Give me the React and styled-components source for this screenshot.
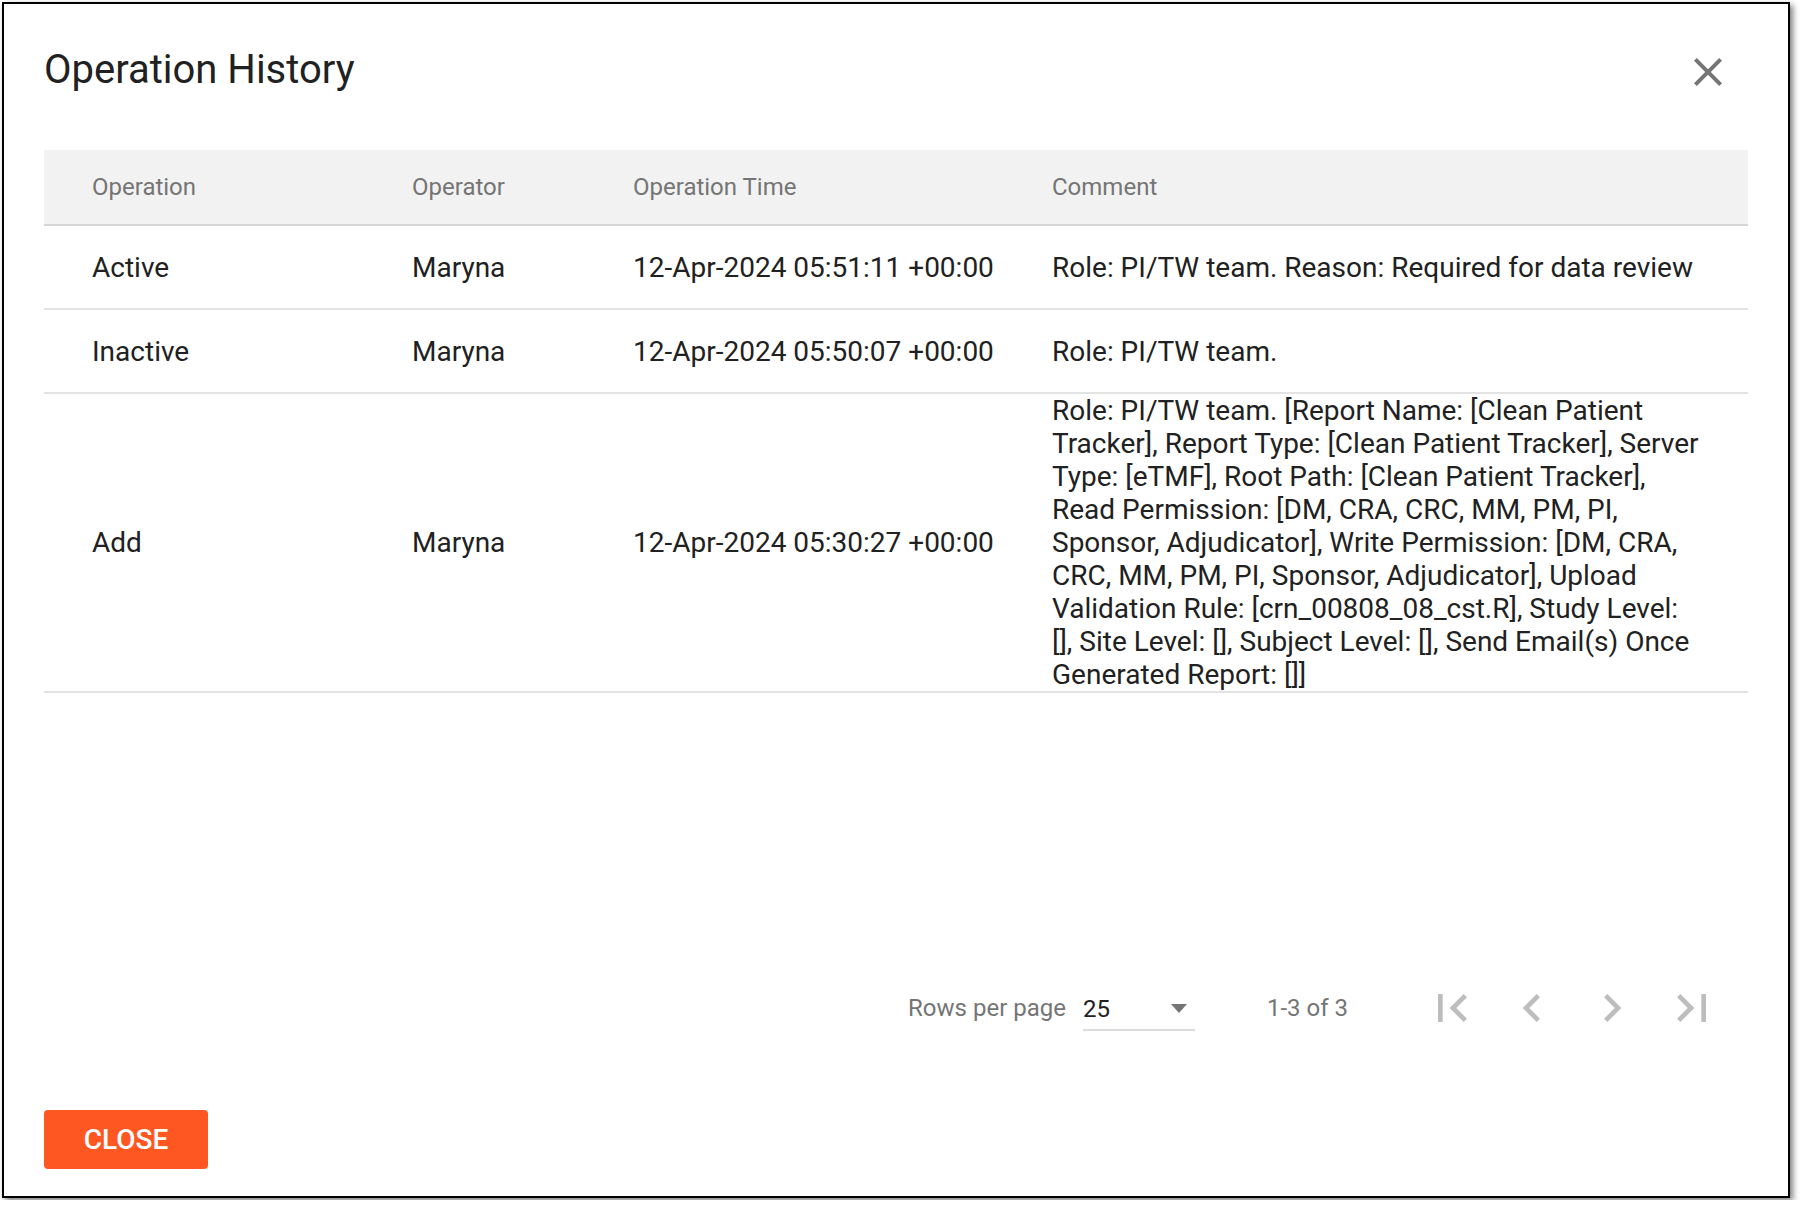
import React from "react";
import styled, { createGlobalStyle } from "styled-components";

const Global = createGlobalStyle`
  html, body { margin: 0; padding: 0; background: #fff; }
  body { font-family: Roboto, "Noto Sans", "Liberation Sans", sans-serif; }
  * { box-sizing: border-box; }
`;

const Frame = styled.div`
  margin: 2px;
  width: 1788px;
  height: 1196px;
  border: 2px solid #000;
  background: #fff;
  box-shadow: 3px 3px 6px rgba(0, 0, 0, 0.5);
  display: flex;
  flex-direction: column;
  padding: 42px 40px 27px 40px;
`;

const TitleRow = styled.div`
  display: flex;
  align-items: center;
  justify-content: space-between;
  height: 48px;
`;

const Title = styled.h2`
  margin: 0;
  font-size: 40px;
  line-height: 48px;
  font-weight: 400;
  color: #212121;
`;

const IconButton = styled.button`
  border: 0;
  background: none;
  padding: 0;
  margin: ${(p) => p.$mt || 0}px ${(p) => p.$mr || 0}px 0 0;
  width: ${(p) => p.$size}px;
  height: ${(p) => p.$size}px;
  display: flex;
  align-items: center;
  justify-content: center;
  color: ${(p) => p.$color};
  cursor: pointer;
  svg { display: block; }
`;

const Table = styled.div`
  margin-top: 56px;
  width: 100%;
`;

const Row = styled.div`
  display: grid;
  grid-template-columns: 368px 221px 419px 696px;
  align-items: ${(p) => (p.$head ? "center" : "stretch")};
  min-height: ${(p) => (p.$head ? 76 : 84)}px;
  background: ${(p) => (p.$head ? "#f2f2f2" : "#fff")};
  border-bottom: 2px solid ${(p) => (p.$head ? "#d6d6d6" : "#e3e3e3")};
`;

const Cell = styled.div`
  display: flex;
  align-items: center;
  font-size: ${(p) => (p.$head ? 24 : 28)}px;
  line-height: ${(p) => (p.$head ? 30 : 33)}px;
  color: ${(p) => (p.$head ? "#757575" : "#212121")};
  padding-left: ${(p) => (p.$first ? 48 : 0)}px;
  padding-right: ${(p) => (p.$last ? 46 : 0)}px;
`;

const Spacer = styled.div`
  flex: 1;
`;

const Pagination = styled.div`
  display: flex;
  align-items: center;
  justify-content: flex-end;
  height: 56px;
  padding-right: 28px;
`;

const PagLabel = styled.span`
  font-size: 24px;
  color: #757575;
  margin-right: ${(p) => p.$mr || 0}px;
  margin-left: ${(p) => p.$ml || 0}px;
`;

const Select = styled.div`
  align-self: flex-start;
  margin-top: 8px;
  width: 112px;
  height: 43px;
  border-bottom: 2px solid #dcdcdc;
  display: flex;
  align-items: center;
  justify-content: space-between;
  padding-right: 8px;
  font-size: 24px;
  color: #212121;
`;

const NavGroup = styled.div`
  display: flex;
  gap: 24px;
  margin-left: 76px;
`;

const Footer = styled.div`
  margin-top: 74px;
  display: flex;
`;

const CloseBtn = styled.button`
  width: 164px;
  height: 59px;
  border: 0;
  border-radius: 4px;
  background: #ff5722;
  color: #fff;
  font-family: Roboto, "Liberation Sans", sans-serif;
  font-size: 28px;
  font-weight: 500;
  text-transform: uppercase;
  cursor: pointer;
`;

const Icon = ({ d, size = 56 }) => (
  <svg width={size} height={size} viewBox="0 0 24 24" fill="currentColor">
    <path d={d} />
  </svg>
);

const rows = [
  { op: "Active", who: "Maryna", time: "12-Apr-2024 05:51:11 +00:00", comment: "Role: PI/TW team. Reason: Required for data review" },
  { op: "Inactive", who: "Maryna", time: "12-Apr-2024 05:50:07 +00:00", comment: "Role: PI/TW team." },
  {
    op: "Add",
    who: "Maryna",
    time: "12-Apr-2024 05:30:27 +00:00",
    comment:
      "Role: PI/TW team. [Report Name: [Clean Patient Tracker], Report Type: [Clean Patient Tracker], Server Type: [eTMF], Root Path: [Clean Patient Tracker], Read Permission: [DM, CRA, CRC, MM, PM, PI, Sponsor, Adjudicator], Write Permission: [DM, CRA, CRC, MM, PM, PI, Sponsor, Adjudicator], Upload Validation Rule: [crn_00808_08_cst.R], Study Level: [], Site Level: [], Subject Level: [], Send Email(s) Once Generated Report: []]",
  },
];

export default function App() {
  return (
    <>
      <Global />
      <Frame>
        <TitleRow>
          <Title>Operation History</Title>
          <IconButton $size={48} $mr={16} $mt={3} $color="#757575" aria-label="close">
            <Icon size={48} d="M19 6.41L17.59 5 12 10.59 6.41 5 5 6.41 10.59 12 5 17.59 6.41 19 12 13.41 17.59 19 19 17.59 13.41 12z" />
          </IconButton>
        </TitleRow>
        <Table>
          <Row $head>
            <Cell $head $first>Operation</Cell>
            <Cell $head>Operator</Cell>
            <Cell $head>Operation Time</Cell>
            <Cell $head $last>Comment</Cell>
          </Row>
          {rows.map((r) => (
            <Row key={r.time}>
              <Cell $first>{r.op}</Cell>
              <Cell>{r.who}</Cell>
              <Cell>{r.time}</Cell>
              <Cell $last>{r.comment}</Cell>
            </Row>
          ))}
        </Table>
        <Spacer />
        <Pagination>
          <PagLabel $mr={17}>Rows per page</PagLabel>
          <Select>
            <span>25</span>
            <svg width="16" height="9" viewBox="0 0 16 9">
              <polygon points="0,0 16,0 8,9" fill="#757575" />
            </svg>
          </Select>
          <PagLabel $ml={72}>1-3 of 3</PagLabel>
          <NavGroup>
            <IconButton $size={56} $color="#bdbdbd" aria-label="first page">
              <Icon d="M18.41 16.59L13.82 12l4.59-4.59L17 6l-6 6 6 6zM6 6h2v12H6z" />
            </IconButton>
            <IconButton $size={56} $color="#bdbdbd" aria-label="previous page">
              <Icon d="M15.41 16.59L10.83 12l4.58-4.59L14 6l-6 6 6 6z" />
            </IconButton>
            <IconButton $size={56} $color="#bdbdbd" aria-label="next page">
              <Icon d="M8.59 16.59L13.17 12 8.59 7.41 10 6l6 6-6 6z" />
            </IconButton>
            <IconButton $size={56} $color="#bdbdbd" aria-label="last page">
              <Icon d="M5.59 7.41L10.18 12l-4.59 4.59L7 18l6-6-6-6zM16 6h2v12h-2z" />
            </IconButton>
          </NavGroup>
        </Pagination>
        <Footer>
          <CloseBtn>Close</CloseBtn>
        </Footer>
      </Frame>
    </>
  );
}
